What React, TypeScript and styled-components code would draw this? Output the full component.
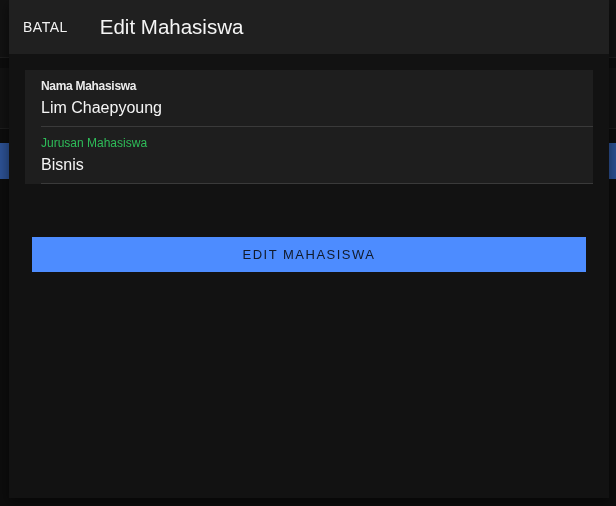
import React from 'react'
import styled, { createGlobalStyle } from 'styled-components'

const GlobalStyle = createGlobalStyle`
	html, body {
		margin: 0;
		padding: 0;
		background: #141414;
		font-family: 'Liberation Sans', Arial, sans-serif;
	}
`

// the page that sits behind the dialog
const Page = styled.div`
	display: flex;
	flex-direction: column;
	height: 506px;
	background: #161616;
`

const AppBar = styled.div`
	height: 57px;
	background: #1f1f1f;
	border-bottom: 1px solid #333;
`

const ListCard = styled.div`
	height: 60px;
	margin-top: 10px;
	background: #1f1f1f;
	border-bottom: 1px solid #333;
`

const PageButton = styled.div`
	height: 36px;
	margin-top: 14px;
	background: #4d8cff;
`

const Backdrop = styled.div`
	position: fixed;
	inset: 0;
	background: rgba(0, 0, 0, 0.42);
`

const Dialog = styled.div`
	position: fixed;
	top: 0;
	left: 9px;
	width: 600px;
	height: 498px;
	display: flex;
	flex-direction: column;
	background: #121212;
	box-shadow: 0 4px 12px rgba(0, 0, 0, 0.5);
`

const Header = styled.div`
	height: 54px;
	flex-shrink: 0;
	display: flex;
	align-items: center;
	gap: 32px;
	padding-left: 14px;
	background: #202020;
`

const CancelButton = styled.button`
	border: none;
	background: none;
	padding: 0;
	color: #f2f2f2;
	font-family: inherit;
	font-size: 14px;
	font-weight: 500;
	letter-spacing: 0.5px;
	cursor: pointer;
`

const Title = styled.div`
	color: #f5f5f5;
	font-size: 20.5px;
`

const FormCard = styled.div`
	margin: 16px 16px 0;
	background: #1e1e1e;
`

const Field = styled.div`
	display: flex;
	flex-direction: column;
	gap: 5px;
	margin-left: 16px;
	padding: 9px 0 8px;
	border-bottom: 1px solid #3a3a3a;
`

const Label = styled.label<{ $active?: boolean }>`
	font-size: 12px;
	line-height: 14px;
	font-weight: ${p => (p.$active ? 400 : 700)};
	letter-spacing: ${p => (p.$active ? '0' : '-0.3px')};
	color: ${p => (p.$active ? '#2ebd59' : '#ececec')};
`

const Value = styled.div`
	font-size: 16px;
	line-height: 20px;
	color: #f5f5f5;
`

const SubmitButton = styled.button`
	height: 35px;
	margin: 53px 23px 0;
	border: none;
	background: #4d8cff;
	color: #111a2a;
	font-family: inherit;
	font-size: 13px;
	letter-spacing: 1.5px;
	text-transform: uppercase;
	cursor: pointer;
`

export default function App() {
	return (
		<>
			<GlobalStyle />
			<Page>
				<AppBar />
				<ListCard />
				<PageButton />
			</Page>
			<Backdrop />
			<Dialog>
				<Header>
					<CancelButton>BATAL</CancelButton>
					<Title>Edit Mahasiswa</Title>
				</Header>
				<FormCard>
					<Field>
						<Label>Nama Mahasiswa</Label>
						<Value>Lim Chaepyoung</Value>
					</Field>
					<Field>
						<Label $active>Jurusan Mahasiswa</Label>
						<Value>Bisnis</Value>
					</Field>
				</FormCard>
				<SubmitButton>Edit Mahasiswa</SubmitButton>
			</Dialog>
		</>
	)
}
